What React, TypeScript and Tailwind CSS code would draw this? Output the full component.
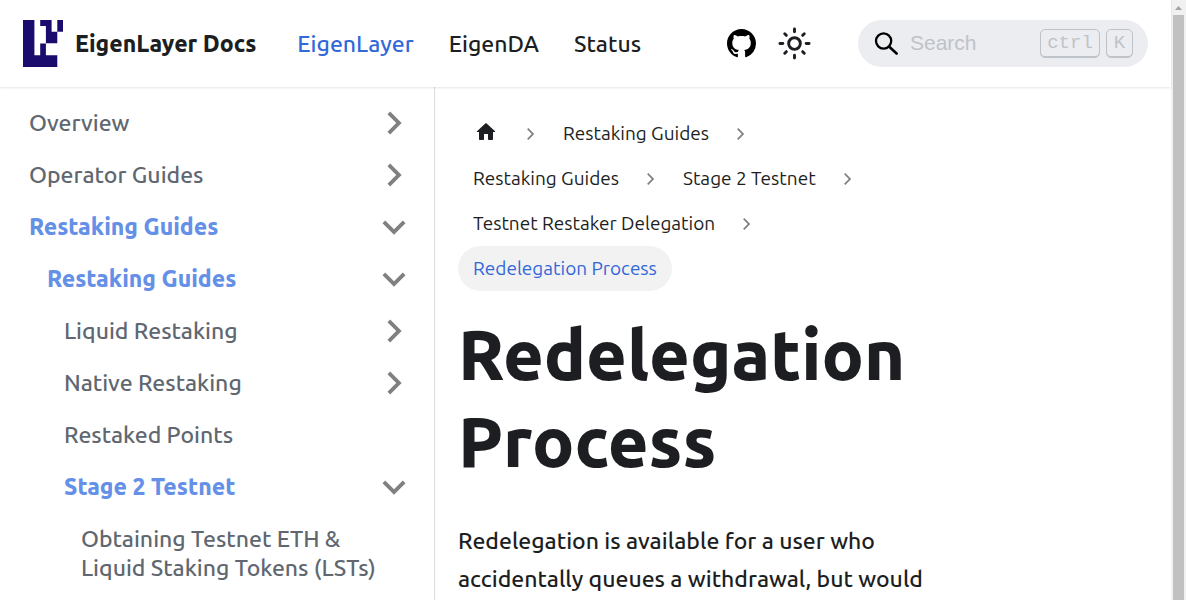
import React from "react";

type Item = { label: string; level: 0 | 1 | 2 | 3; active?: boolean; caret?: "right" | "down" };

const items: Item[] = [
  { label: "Overview", level: 0, caret: "right" },
  { label: "Operator Guides", level: 0, caret: "right" },
  { label: "Restaking Guides", level: 0, active: true, caret: "down" },
  { label: "Restaking Guides", level: 1, active: true, caret: "down" },
  { label: "Liquid Restaking", level: 2, caret: "right" },
  { label: "Native Restaking", level: 2, caret: "right" },
  { label: "Restaked Points", level: 2 },
  { label: "Stage 2 Testnet", level: 2, active: true, caret: "down" },
  { label: "Obtaining Testnet ETH & Liquid Staking Tokens (LSTs)", level: 3 },
];

const indents = ["pl-[29px]", "pl-[47px]", "pl-[64px]", "pl-[81px]"];

const crumbs = ["Restaking Guides", "Restaking Guides", "Stage 2 Testnet", "Testnet Restaker Delegation"];

function Caret({ down }: { down?: boolean }) {
  return (
    <svg viewBox="0 0 24 24" className={`size-[46px] ${down ? "rotate-180" : "rotate-90"}`} fill="#808080" aria-hidden="true">
      <path d="M7.41 15.41 12 10.83l4.59 4.58L18 14l-6-6-6 6z" />
    </svg>
  );
}

function Separator() {
  return (
    <span className="flex w-[34px] justify-center" aria-hidden="true">
      <svg viewBox="0 0 24 24" className="size-6" fill="#7f7f7f">
        <path d="m9.3 17.9-1.2-1.2 4.7-4.7-4.7-4.7 1.2-1.2 5.9 5.9z" />
      </svg>
    </span>
  );
}

function Logo() {
  return (
    <svg viewBox="0 0 40 47" className="h-[47px] w-10" fill="#1a0c6d" aria-hidden="true">
      <path d="M0 0h11.4v35.2h5.8V23.4h5.7v11.8h11.4V47H0z" />
      <path d="M17.2 0h11.4v11.8h5.7v11.4H22.9V6h-5.7zM34.3 0H40v11.7h-5.7z" />
    </svg>
  );
}

export default function App() {
  return (
    <div className="flex h-screen overflow-hidden bg-white font-[Ubuntu,'Noto_Sans',sans-serif] font-medium text-[#1c1e21]">
      <div className="flex min-w-0 flex-1 flex-col">
        <header className="z-10 flex h-[87px] shrink-0 items-center bg-white px-[23px] shadow-[0_1px_2px_0_rgba(0,0,0,0.1)]">
          <a href="#home" className="flex items-center gap-3 text-[23px] font-extrabold whitespace-nowrap">
            <Logo />
            <span className="pt-0.5">EigenLayer Docs</span>
          </a>
          <nav aria-label="Main" className="ml-[41px] flex gap-[35px] pt-0.5 text-[23px]">
            <a href="#eigenlayer" className="text-[#3268d8]">EigenLayer</a>
            <a href="#eigenda">EigenDA</a>
            <a href="#status">Status</a>
          </nav>
          <a href="#github" aria-label="GitHub" className="ml-auto">
            <svg viewBox="0 0 16 16" className="size-[29px]" fill="#000" aria-hidden="true">
              <path d="M8 0C3.58 0 0 3.58 0 8c0 3.54 2.29 6.53 5.47 7.59.4.07.55-.17.55-.38 0-.19-.01-.82-.01-1.49-2.01.37-2.53-.49-2.69-.94-.09-.23-.48-.94-.82-1.13-.28-.15-.68-.52-.01-.53.63-.01 1.08.58 1.23.82.72 1.21 1.87.87 2.33.66.07-.52.28-.87.51-1.07-1.78-.2-3.64-.89-3.64-3.95 0-.87.31-1.59.82-2.15-.08-.2-.36-1.02.08-2.12 0 0 .67-.21 2.2.82.64-.18 1.32-.27 2-.27s1.36.09 2 .27c1.53-1.04 2.2-.82 2.2-.82.44 1.1.16 1.92.08 2.12.51.56.82 1.27.82 2.15 0 3.07-1.87 3.75-3.65 3.95.29.25.54.73.54 1.48 0 1.07-.01 1.93-.01 2.2 0 .21.15.46.55.38A8.01 8.01 0 0 0 16 8c0-4.42-3.58-8-8-8z" />
            </svg>
          </a>
          <button type="button" aria-label="Switch colour mode" className="ml-[21px]">
            <svg viewBox="0 0 24 24" className="size-[35px]" fill="none" stroke="#1c1e21" strokeWidth="2" strokeLinecap="round" aria-hidden="true">
              <circle cx="12" cy="12" r="4" />
              <path d="M12 2v2M12 20v2M2 12h2M20 12h2M5.3 5.3l1.1 1.1M17.6 17.6l1.1 1.1M5.3 18.7l1.1-1.1M17.6 6.4l1.1-1.1" />
            </svg>
          </button>
          <label className="ml-[46px] flex h-[47px] w-[290px] items-center rounded-full bg-[#ebedf0] pr-[15px] pl-4 font-['Liberation_Sans',sans-serif]">
            <svg viewBox="0 0 24 24" className="size-6 shrink-0" fill="none" stroke="#000" strokeWidth="2.3" aria-hidden="true">
              <circle cx="9.6" cy="9" r="7.6" />
              <path d="m15 14.5 7.6 7" strokeWidth="2.6" strokeLinecap="round" />
            </svg>
            <input type="search" placeholder="Search" aria-label="Search" className="ml-3 min-w-0 flex-1 bg-transparent pb-0.5 text-[21px] font-normal outline-none placeholder:text-[#bec3c9]" />
            <span className="flex gap-[6px] text-[19px] font-normal text-[#bec3c9]">
              <kbd className="flex h-[29px] w-[60px] items-center justify-center rounded-[5px] border border-[#bec3c9] font-['Liberation_Mono',monospace] shadow-[inset_0_-1px_0_#bec3c9]">ctrl</kbd>
              <kbd className="flex h-[29px] w-[27px] items-center justify-center rounded-[5px] border border-[#bec3c9] font-['Liberation_Mono',monospace] shadow-[inset_0_-1px_0_#bec3c9]">K</kbd>
            </span>
          </label>
        </header>
        <div className="flex min-h-0 flex-1">
          <aside className="w-[435px] shrink-0 overflow-hidden border-r border-[#dadde1] pt-[12px] pr-[17px] text-[23px] leading-[29px] text-[#606770]">
            <ul className="flex flex-col gap-[5px]">
              {items.map((item, i) => (
                <li key={i} className={`flex items-center justify-between ${indents[item.level]}`}>
                  <a
                    href="#doc"
                    className={`py-[9px] ${item.active ? "font-extrabold text-[#6590e8]" : ""} ${item.caret ? "" : "pr-[23px]"}`}
                  >
                    {item.label}
                  </a>
                  {item.caret && (
                    <button type="button" aria-label={`Toggle ${item.label}`}>
                      <Caret down={item.caret === "down"} />
                    </button>
                  )}
                </li>
              ))}
            </ul>
          </aside>
          <main className="min-w-0 flex-1 overflow-hidden px-[23px]">
            <article className="w-3/4 pt-[24px] pr-[46px]">
              <nav aria-label="Breadcrumbs">
                <ol className="flex flex-wrap text-[19px] leading-[45px] font-normal">
                  <li className="flex items-center">
                    <a href="#home" aria-label="Home" className="flex h-[45px] w-14 items-center justify-center pb-1">
                      <svg viewBox="0 0 24 24" className="size-6" fill="#1c1e21" aria-hidden="true">
                        <path d="M10 19v-5h4v5c0 .55.45 1 1 1h3c.55 0 1-.45 1-1v-7h1.7c.46 0 .68-.57.33-.87L12.67 3.6c-.38-.34-.96-.34-1.34 0l-8.36 7.53c-.34.3-.13.87.33.87H5v7c0 .55.45 1 1 1h3c.55 0 1-.45 1-1z" />
                      </svg>
                    </a>
                    <Separator />
                  </li>
                  {crumbs.map((crumb, i) => (
                    <li key={i} className="flex items-center">
                      <a href="#crumb" className="px-[15px]">{crumb}</a>
                      <Separator />
                    </li>
                  ))}
                  <li>
                    <span aria-current="page" className="block rounded-full bg-[#f2f2f2] px-[15px] text-[#3268d8]">Redelegation Process</span>
                  </li>
                </ol>
              </nav>
              <h1 className="mt-[20px] text-[70px] leading-[87px] font-extrabold">Redelegation Process</h1>
              <p className="mt-[37px] text-[23px] leading-[38px]">
                Redelegation is available for a user who accidentally queues a withdrawal, but would
              </p>
            </article>
          </main>
        </div>
      </div>
      <div className="flex w-[15px] shrink-0 flex-col items-center bg-[#f1f1f1]" aria-hidden="true">
        <svg viewBox="0 0 15 15" className="size-[15px] shrink-0" fill="#a3a3a3">
          <path d="M4 10h7L7.5 6z" />
        </svg>
        <div className="w-[11px] flex-1 bg-[#c1c1c1]" />
      </div>
    </div>
  );
}
